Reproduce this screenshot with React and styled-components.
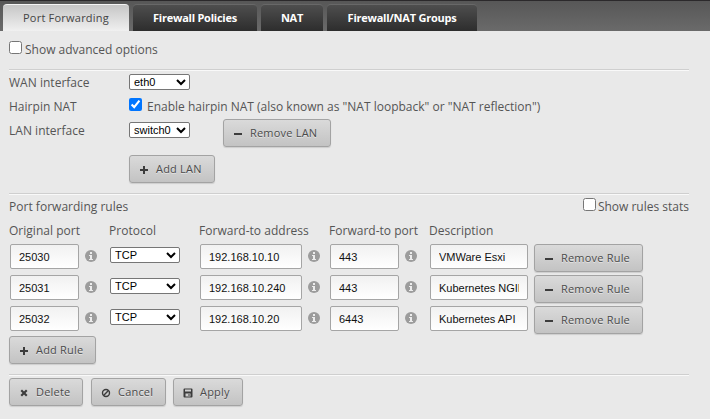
import React from 'react';
import styled, { createGlobalStyle } from 'styled-components';

const GlobalStyle = createGlobalStyle`
  * { box-sizing: border-box; }
  body {
    margin: 0;
    background: #e9e9e9;
    color: #555;
    font: 12px/16px 'Open Sans', sans-serif;
  }
`;

const Page = styled.div`
  height: 419px;
  overflow: hidden;
  background: #e9e9e9;
`;

const TabBar = styled.nav`
  display: flex;
  gap: 4px;
  height: 31px;
  padding: 3px 3px 0;
  border-top: 1px solid #2b292b;
  background: linear-gradient(#575757, #6a6a6a);
`;

const Tab = styled.button`
  width: ${(p) => p.$width}px;
  height: 27px;
  padding: 0 0 1px;
  border: 0;
  border-top: 1px solid ${(p) => (p.$active ? '#f4f4f4' : '#686868')};
  border-radius: 4px 4px 0 0;
  background: ${(p) => (p.$active ? 'linear-gradient(#c6c6c6, #f0f0f0)' : 'linear-gradient(#4e4e4e, #2d2d2d)')};
  color: ${(p) => (p.$active ? '#444' : '#fff')};
  font: ${(p) => (p.$active ? 400 : 700)} 11px/26px 'Open Sans', sans-serif;
  letter-spacing: ${(p) => (p.$active ? 0.22 : -0.24)}px;
  white-space: nowrap;
`;

const Content = styled.main`
  width: 689px;
  padding-left: 9px;
`;

const Section = styled.section`
  height: ${(p) => p.$height}px;
  padding-top: ${(p) => p.$top}px;
  border-top: ${(p) => (p.$first ? '0' : '1px solid #cfcfcf')};
  box-shadow: ${(p) => (p.$first ? 'none' : 'inset 0 1px #f9f9f9')};
`;

const CheckLabel = styled.label`
  display: flex;
  align-items: flex-start;
  gap: ${(p) => p.$gap}px;
  white-space: nowrap;
`;

const Checkbox = styled.input`
  width: 13px;
  height: 13px;
  margin: 0;
`;

const CheckText = styled.span`
  margin-top: 1px;
`;

const FormRow = styled.div`
  display: grid;
  grid-template-columns: 120px 94px auto;
  justify-content: start;
  align-items: start;
  height: ${(p) => p.$height || 24}px;
`;

const WideCell = styled.div`
  grid-column: 2 / 4;
`;

const Label = styled.span`
  padding-top: 1px;
  letter-spacing: 0.02px;
  white-space: nowrap;
`;

const Select = styled.select`
  width: ${(p) => p.$width}px;
  height: 16px;
  margin: 0;
  padding: 0;
  border: 1px solid #767676;
  border-radius: 2px;
  background: #fff;
  color: #000;
  font: 11px 'Liberation Sans', Arial, sans-serif;
`;

const Button = styled.button`
  display: flex;
  align-items: center;
  width: ${(p) => p.$width}px;
  height: 28px;
  margin: ${(p) => p.$raise ? -p.$raise : 0}px 0 0;
  padding: 0 0 0 9px;
  border: 1px solid #a3a3a3;
  border-radius: 3px;
  background: linear-gradient(#dadada, #c3c3c3);
  box-shadow: 0 1px 1px rgba(0, 0, 0, 0.12);
  color: #4b4b4b;
  font: 11px/26px 'Open Sans', sans-serif;
  letter-spacing: 0.2px;
  text-shadow: 0 1px 0 rgba(255, 255, 255, 0.5);
  white-space: nowrap;
`;

const ButtonText = styled.span`
  margin-left: 7px;
`;

const SectionHead = styled.div`
  display: flex;
  justify-content: space-between;
  height: 24px;
`;

const RuleGrid = styled.div`
  display: grid;
  grid-template-columns: 100px 90px 130px 100px 105px 109px;
  align-items: start;
  height: ${(p) => p.$height}px;
`;

const Field = styled.div`
  display: flex;
  align-items: center;
  gap: 6px;
  padding-left: 1px;
`;

const SelectField = styled.div`
  display: flex;
  padding: 3px 0 0 1px;
`;

const TextInput = styled.input`
  width: ${(p) => p.$width}px;
  height: 25px;
  margin: 0;
  padding: 1px 8px 0;
  border: 1px solid #a5a5a5;
  border-radius: 2px;
  background: linear-gradient(#f1f1f1, #fff);
  color: #111;
  font: 11px 'Liberation Sans', Arial, sans-serif;
`;

const Actions = styled.div`
  display: flex;
`;

const ActionSlot = styled.div`
  width: 82px;
`;

const icons = {
  plus: <path d="M4 1h2v3h3v2H6v3H4V6H1V4h3z" />,
  minus: <path d="M1 4h8v2H1z" />,
  cross: <path d="M1.500 3 3 1.500l2 2 2-2L8.500 3l-2 2 2 2L7 8.500l-2-2-2 2L1.500 7l2-2z" />,
  cancel: (
    <g fill="none" stroke="currentColor" strokeWidth="1.4">
      <circle cx="5" cy="5" r="3.500" />
      <path d="M7.400 2.600 2.600 7.400" />
    </g>
  ),
  save: (
    <path
      fillRule="evenodd"
      d="M1.500.5h7a1 1 0 0 1 1 1v7a1 1 0 0 1-1 1h-7a1 1 0 0 1-1-1v-7a1 1 0 0 1 1-1zM2 1.500v2h6v-2zM2.500 5.500V8.500h5v-3zM5.500 6h1v2h-1z"
    />
  ),
};

const Glyph = styled.svg`
  flex: none;
  width: 10px;
  height: 10px;
  margin-top: 2px;
  fill: currentColor;
  color: #3c3c3c;
`;

const InfoSvg = styled.svg`
  flex: none;
  width: 12px;
  height: 12px;
  margin-bottom: 1px;
`;

const InfoIcon = () => (
  <InfoSvg viewBox="0 0 12 12">
    <circle cx="6" cy="6" r="6" fill="#9c9c9c" />
    <path d="M5 2h2v2H5zM4 5h3v4h1v1H4V9h1V6H4z" fill="#ececec" />
  </InfoSvg>
);

const IconButton = ({ icon, width, raise, children }) => (
  <Button $width={width} $raise={raise}>
    <Glyph viewBox="0 0 10 10">{icons[icon]}</Glyph>
    <ButtonText>{children}</ButtonText>
  </Button>
);

const rules = [
  { port: '25030', address: '192.168.10.10', to: '443', description: 'VMWare Esxi' },
  { port: '25031', address: '192.168.10.240', to: '443', description: 'Kubernetes NGINX' },
  { port: '25032', address: '192.168.10.20', to: '6443', description: 'Kubernetes API' },
];

const RuleRow = ({ rule }) => (
  <RuleGrid $height={31}>
    <Field>
      <TextInput $width={69} defaultValue={rule.port} />
      <InfoIcon />
    </Field>
    <SelectField>
      <Select $width={70}><option>TCP</option></Select>
    </SelectField>
    <Field>
      <TextInput $width={102} defaultValue={rule.address} />
      <InfoIcon />
    </Field>
    <Field>
      <TextInput $width={69} defaultValue={rule.to} />
      <InfoIcon />
    </Field>
    <Field>
      <TextInput $width={98} defaultValue={rule.description} />
    </Field>
    <IconButton icon="minus" width={109}>Remove Rule</IconButton>
  </RuleGrid>
);

export default function App() {
  return (
    <Page>
      <GlobalStyle />
      <TabBar>
        <Tab $active $width={126}>Port Forwarding</Tab>
        <Tab $width={124}>Firewall Policies</Tab>
        <Tab $width={62}>NAT</Tab>
        <Tab $width={150}>Firewall/NAT Groups</Tab>
      </TabBar>
      <Content>
        <Section $first $height={38} $top={10}>
          <CheckLabel $gap={3}>
            <Checkbox type="checkbox" />
            <CheckText>Show advanced options</CheckText>
          </CheckLabel>
        </Section>
        <Section $height={124} $top={4}>
          <FormRow>
            <Label>WAN interface</Label>
            <Select $width={61}><option>eth0</option></Select>
          </FormRow>
          <FormRow>
            <Label>Hairpin NAT</Label>
            <WideCell>
              <CheckLabel $gap={5}>
                <Checkbox type="checkbox" defaultChecked />
                <CheckText>Enable hairpin NAT (also known as "NAT loopback" or "NAT reflection")</CheckText>
              </CheckLabel>
            </WideCell>
          </FormRow>
          <FormRow $height={33}>
            <Label>LAN interface</Label>
            <Select $width={61}><option>switch0</option></Select>
            <IconButton icon="minus" width={108} raise={3}>Remove LAN</IconButton>
          </FormRow>
          <FormRow $height={28}>
            <span />
            <IconButton icon="plus" width={86}>Add LAN</IconButton>
          </FormRow>
        </Section>
        <Section $height={181} $top={4}>
          <SectionHead>
            <Label>Port forwarding rules</Label>
            <CheckLabel $gap={2}>
              <Checkbox type="checkbox" />
              <CheckText>Show rules stats</CheckText>
            </CheckLabel>
          </SectionHead>
          <RuleGrid $height={22}>
            <Label>Original port</Label>
            <Label>Protocol</Label>
            <Label>Forward-to address</Label>
            <Label>Forward-to port</Label>
            <Label>Description</Label>
          </RuleGrid>
          {rules.map((rule) => <RuleRow key={rule.port} rule={rule} />)}
          <IconButton icon="plus" width={87} raise={1}>Add Rule</IconButton>
        </Section>
        <Section $height={44} $top={3}>
          <Actions>
            <ActionSlot><IconButton icon="cross" width={74}>Delete</IconButton></ActionSlot>
            <ActionSlot><IconButton icon="cancel" width={75}>Cancel</IconButton></ActionSlot>
            <ActionSlot><IconButton icon="save" width={70}>Apply</IconButton></ActionSlot>
          </Actions>
        </Section>
      </Content>
    </Page>
  );
}
